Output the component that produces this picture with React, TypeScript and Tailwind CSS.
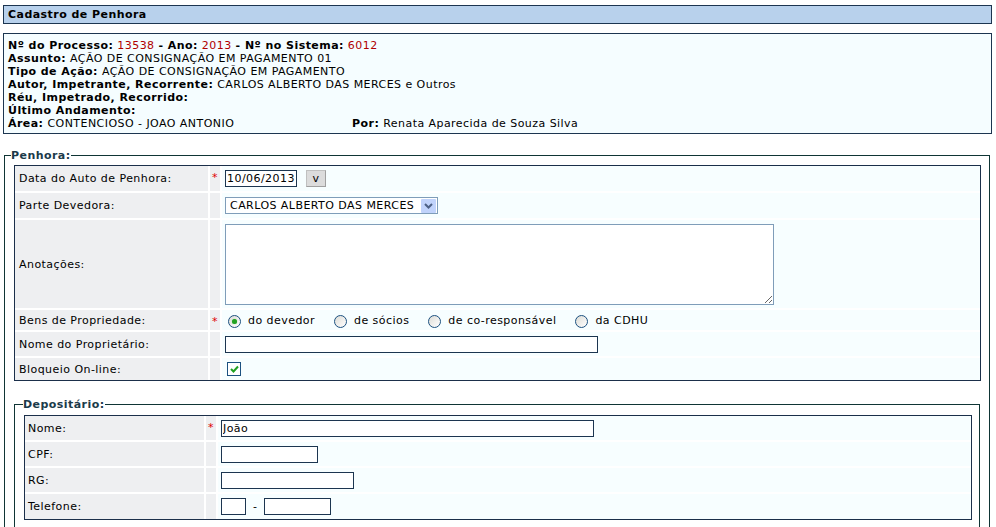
import React from 'react';

const font = { fontFamily: '"DejaVu Sans", Verdana, sans-serif' };

function Radio({ checked }: { checked?: boolean }) {
  return (
    <span className="relative mt-[3px] inline-flex h-[13px] w-[13px] shrink-0 items-center justify-center rounded-full border border-[#1c5180] bg-gradient-to-br from-[#dcdcd6] to-[#ffffff]">
      {checked && <span className="h-[5px] w-[5px] rounded-full bg-[#21a121] shadow-[0_0_1px_#6ad56a]" />}
    </span>
  );
}

function Check() {
  return (
    <span className="inline-flex h-[14px] w-[14px] items-center justify-center border border-[#1c5180] bg-white">
      <svg width="9" height="8" viewBox="0 0 9 8">
        <path d="M1 4 L3.5 6.5 L8 1.5" fill="none" stroke="#21a121" strokeWidth="2" />
      </svg>
    </span>
  );
}

function Row({
  label,
  required,
  h,
  labelW,
  pad,
  children,
}: {
  label: string;
  required?: boolean;
  h: string;
  labelW: string;
  pad: string;
  children?: React.ReactNode;
}) {
  return (
    <div className={`flex gap-x-[2px] ${h}`}>
      <div className={`flex shrink-0 items-center bg-[#eeeff1] ${labelW} ${pad}`}>{label}</div>
      <div className="flex w-[10px] shrink-0 justify-center bg-[#eeeff1] pt-[5px] text-[#e00000]">{required ? '*' : ''}</div>
      <div className="flex flex-1 items-center bg-[#f7feff] pl-[3px]">{children}</div>
    </div>
  );
}

const inputCls = 'h-[17px] border border-[#1c3550] bg-white px-[1px] text-[11px] leading-[15px] tracking-[0.45px] outline-none';

export default function App() {
  return (
    <div style={font} className="h-[527px] w-[996px] overflow-hidden bg-white text-[11px] leading-[13px] tracking-[0.45px] text-black">
      {/* Titulo */}
      <div className="ml-[3px] mt-[5px] h-[19px] w-[989px] border border-[#1c3550] bg-[#b8d1ec] pl-[4px] font-bold leading-[17px]">
        Cadastro de Penhora
      </div>

      {/* Dados do processo */}
      <div className="ml-[3px] mt-[9px] h-[101px] w-[989px] border border-[#1c3550] bg-[#f5fdff] pl-[4px] pt-[5px]">
        <div>
          <b>Nº do Processo:</b> <span className="text-[#b00000]">13538</span> <b>- Ano:</b>{' '}
          <span className="text-[#b00000]">2013</span> <b>- Nº no Sistema:</b> <span className="text-[#b00000]">6012</span>
        </div>
        <div>
          <b>Assunto:</b> AÇÃO DE CONSIGNAÇÃO EM PAGAMENTO 01
        </div>
        <div>
          <b>Tipo de Ação:</b> AÇÃO DE CONSIGNAÇÃO EM PAGAMENTO
        </div>
        <div>
          <b>Autor, Impetrante, Recorrente:</b> CARLOS ALBERTO DAS MERCES e Outros
        </div>
        <div>
          <b>Réu, Impetrado, Recorrido:</b>
        </div>
        <div>
          <b>Último Andamento:</b>
        </div>
        <div className="flex">
          <div className="w-[344px]">
            <b>Área:</b> CONTENCIOSO - JOAO ANTONIO
          </div>
          <div>
            <b>Por:</b> Renata Aparecida de Souza Silva
          </div>
        </div>
      </div>

      {/* Penhora */}
      <fieldset className="ml-[4px] mt-[15px] w-[986px] border border-[#0f3535] pb-[40px] pl-[9px] pr-[8px] pt-[3px]">
        <legend className="-ml-[3px] font-bold text-[#1b3a4a]">Penhora:</legend>

        <div className="flex w-[967px] flex-col gap-y-[2px] border border-[#1b2f4a] bg-white">
          <Row label="Data do Auto de Penhora:" required h="h-[25px]" labelW="w-[193px]" pad="pl-[4px]">
            <input className={`${inputCls} w-[72px]`} defaultValue="10/06/2013" />
            <button className="ml-[9px] h-[17px] w-[20px] border border-[#c0c0c0] border-b-[#a0a0a0] border-r-[#a0a0a0] bg-[#dcdcdc] text-[11px] leading-[13px]">
              v
            </button>
          </Row>
          <Row label="Parte Devedora:" h="h-[25px]" labelW="w-[193px]" pad="pl-[4px]">
            <div className="flex h-[17px] w-[213px] items-center justify-between border border-[#7f9db9] bg-white pl-[4px] pr-[1px]">
              <span>CARLOS ALBERTO DAS MERCES</span>
              <span className="flex h-[14px] w-[15px] items-center justify-center rounded-[1px] bg-[#c1d3fb]">
                <svg width="9" height="6" viewBox="0 0 9 6">
                  <path d="M1 1 L4.5 4.5 L8 1" fill="none" stroke="#4d6185" strokeWidth="2" />
                </svg>
              </span>
            </div>
          </Row>
          <Row label="Anotações:" h="h-[88px]" labelW="w-[193px]" pad="pl-[4px]">
            <textarea className="h-[81px] w-[549px] resize border border-[#7f9db9] bg-white outline-none" />
          </Row>
          <Row label="Bens de Propriedade:" required h="h-[20px]" labelW="w-[193px]" pad="pl-[4px]">
            <div className="flex items-center pl-[3px]">
              <Radio checked />
              <span className="ml-[7px] mr-[19px]">do devedor</span>
              <Radio />
              <span className="ml-[7px] mr-[19px]">de sócios</span>
              <Radio />
              <span className="ml-[7px] mr-[19px]">de co-responsável</span>
              <Radio />
              <span className="ml-[7px]">da CDHU</span>
            </div>
          </Row>
          <Row label="Nome do Proprietário:" h="h-[24px]" labelW="w-[193px]" pad="pl-[4px]">
            <input className={`${inputCls} w-[373px]`} />
          </Row>
          <Row label="Bloqueio On-line:" h="h-[22px]" labelW="w-[193px]" pad="pl-[4px]">
            <div className="pl-[2px]">
              <Check />
            </div>
          </Row>
        </div>

        {/* Depositario */}
        <fieldset className="mt-[17px] w-[966px] border border-[#0f3535] pb-[40px] pl-[9px] pr-[7px] pt-[4px]">
          <legend className="-ml-[1px] font-bold text-[#1b3a4a]">Depositário:</legend>
          <div className="flex w-[948px] flex-col gap-y-[2px] border border-[#1b2f4a] bg-white">
            <Row label="Nome:" required h="h-[24px]" labelW="w-[179px]" pad="pl-[3px]">
              <input className={`${inputCls} w-[373px]`} defaultValue="João" />
            </Row>
            <Row label="CPF:" h="h-[24px]" labelW="w-[179px]" pad="pl-[3px]">
              <input className={`${inputCls} w-[97px]`} />
            </Row>
            <Row label="RG:" h="h-[24px]" labelW="w-[179px]" pad="pl-[3px]">
              <input className={`${inputCls} w-[133px]`} />
            </Row>
            <Row label="Telefone:" h="h-[25px]" labelW="w-[179px]" pad="pl-[3px]">
              <input className={`${inputCls} w-[25px]`} />
              <span className="mx-[7px]">-</span>
              <input className={`${inputCls} w-[67px]`} />
            </Row>
          </div>
        </fieldset>
      </fieldset>
    </div>
  );
}
